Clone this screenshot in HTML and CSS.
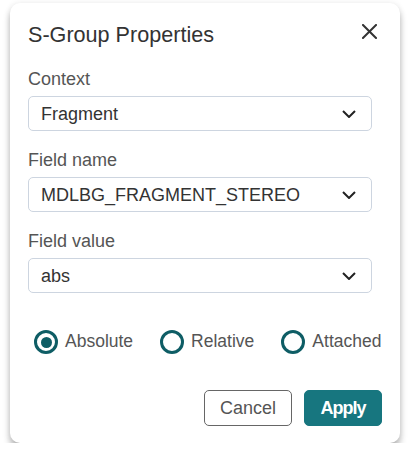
FILE: index.html
```html
<!DOCTYPE html>
<html>
<head>
<meta charset="utf-8">
<link rel="stylesheet" href="styles.css">
</head>
<body>
<div class="dialog">
  <div class="header">
    <div class="title">S-Group Properties</div>
    <button class="close" aria-label="Close">
      <svg width="15" height="15" viewBox="0 0 15 15"><path d="M1 1 L14 14 M14 1 L1 14" stroke="#333" stroke-width="2" stroke-linecap="square" fill="none"/></svg>
    </button>
  </div>
  <div class="body">
    <div class="field">
      <div class="label">Context</div>
      <div class="select"><span>Fragment</span><svg class="chev" width="14" height="8" viewBox="0 0 14 8"><path d="M1 1 L7 7 L13 1" stroke="#222" stroke-width="2" fill="none"/></svg></div>
    </div>
    <div class="field">
      <div class="label">Field name</div>
      <div class="select"><span>MDLBG_FRAGMENT_STEREO</span><svg class="chev" width="14" height="8" viewBox="0 0 14 8"><path d="M1 1 L7 7 L13 1" stroke="#222" stroke-width="2" fill="none"/></svg></div>
    </div>
    <div class="field">
      <div class="label">Field value</div>
      <div class="select"><span>abs</span><svg class="chev" width="14" height="8" viewBox="0 0 14 8"><path d="M1 1 L7 7 L13 1" stroke="#222" stroke-width="2" fill="none"/></svg></div>
    </div>
  </div>
  <div class="radios">
    <label class="radio"><span class="ring checked"><span class="dot"></span></span><span class="rtext">Absolute</span></label>
    <label class="radio"><span class="ring"></span><span class="rtext">Relative</span></label>
    <label class="radio"><span class="ring"></span><span class="rtext">Attached</span></label>
  </div>
  <div class="footer">
    <button class="btn cancel">Cancel</button>
    <button class="btn apply">Apply</button>
  </div>
</div>
</body>
</html>
```

FILE: styles.css
```css
* { box-sizing: border-box; }
html, body { margin: 0; padding: 0; background: #fff; }
body { font-family: "Liberation Sans", Arial, sans-serif; color: #333; }

.dialog {
  width: 390px;
  margin: 3px 8px 0 10px;
  padding: 18px 18px 17px 18px;
  background: #fff;
  border-radius: 10px;
  box-shadow: 0 6px 7px rgba(0, 0, 0, 0.28), 0 0 6px rgba(0, 0, 0, 0.08);
}

.header {
  display: flex;
  justify-content: space-between;
  align-items: flex-start;
}
.title {
  font-size: 21.6px;
  line-height: 27px;
  color: #333;
}
.close {
  border: 0;
  background: none;
  padding: 0;
  margin: 3px 4.7px 0 0;
  width: 15px;
  height: 15px;
  display: block;
}
.close svg { display: block; }

.body { padding-right: 10px; margin-top: 20px; }
.field + .field { margin-top: 18px; }
.label {
  font-size: 18px;
  line-height: 22px;
  color: #555;
}
.select {
  margin-top: 6px;
  height: 35px;
  border: 1px solid #cdd5e0;
  border-radius: 5px;
  padding: 0 15px 0 12px;
  display: flex;
  align-items: center;
  justify-content: space-between;
  font-size: 18px;
  line-height: 22px;
  color: #333;
}
.chev { display: block; }

.radios {
  margin-top: 37px;
  padding-left: 6px;
  display: flex;
  gap: 27px;
}
.radio {
  display: flex;
  align-items: center;
  gap: 7px;
  font-size: 17.5px;
  line-height: 22px;
  color: #555;
}
.rtext { padding-bottom: 2px; }
.ring {
  width: 24px;
  height: 24px;
  border: 3.5px solid #0e5d65;
  border-radius: 50%;
  display: flex;
  align-items: center;
  justify-content: center;
}
.dot {
  width: 11px;
  height: 11px;
  border-radius: 50%;
  background: #0e5d65;
}

.footer {
  margin-top: 36px;
  display: flex;
  justify-content: flex-end;
  gap: 12px;
}
.btn {
  height: 36px;
  font-family: "Liberation Sans", Arial, sans-serif;
  font-size: 18px;
  border-radius: 5px;
  padding: 0 15px;
}
.cancel {
  background: #fff;
  border: 1px solid #666;
  color: #555;
}
.apply {
  width: 78px;
  background: #17767f;
  border: 1px solid #17767f;
  color: #fff;
  font-size: 18px;
  font-weight: bold;
  letter-spacing: -1px;
  padding: 0;
}
```
